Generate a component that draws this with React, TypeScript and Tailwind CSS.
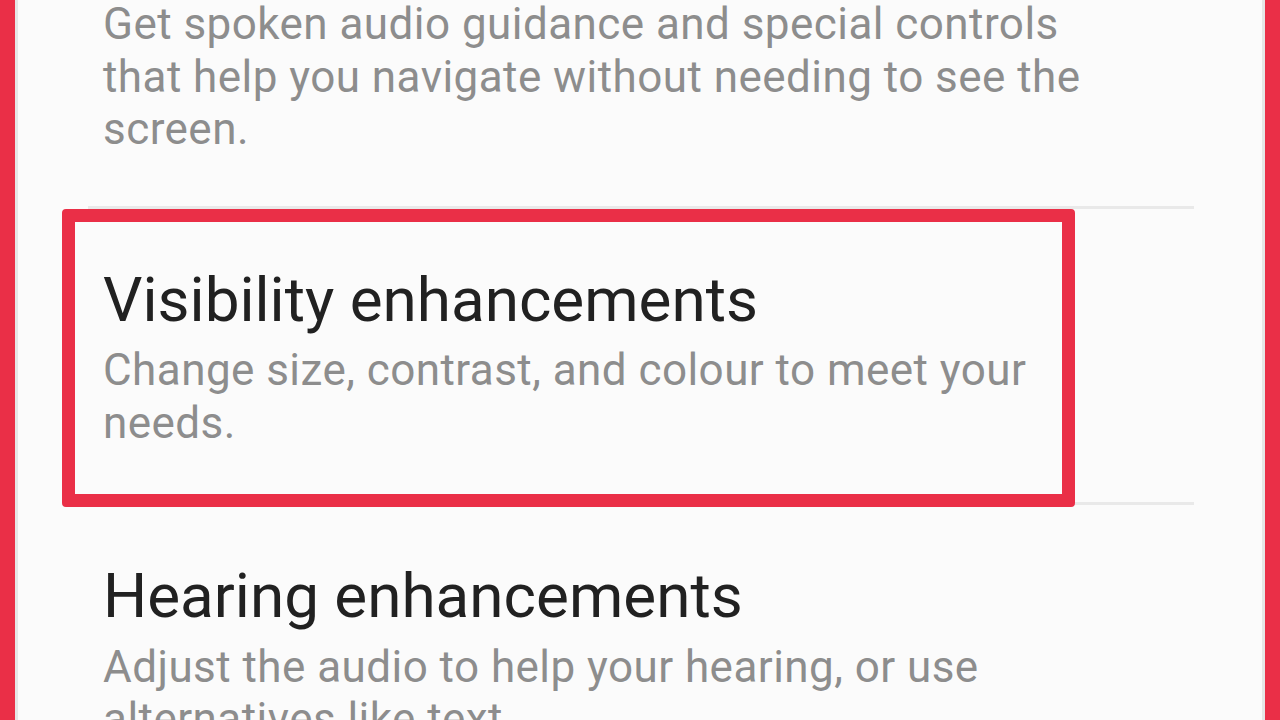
import React from "react";

const font = { fontFamily: "Roboto, 'Noto Sans', sans-serif" };

function Row({
  title,
  lines,
  first,
}: {
  title?: string;
  lines: string[];
  first?: boolean;
}) {
  return (
    <div className={first ? "mt-[-2px] pb-[50px]" : "pt-[55px] pb-[53px]"}>
      <div className="pl-[15px]">
        {title && (
          <div className="text-[62px] leading-[72px] text-[#212121] whitespace-nowrap mb-[8.5px]">
            {title}
          </div>
        )}
        <div className="text-[44px] leading-[52.5px] tracking-[0.45px] text-[#8d8d8d] whitespace-nowrap">
          {lines.map((l, i) => (
            <div key={i}>{l}</div>
          ))}
        </div>
      </div>
    </div>
  );
}

export default function App() {
  return (
    <div
      className="w-[1280px] h-[720px] overflow-hidden flex bg-[#fbfbfb]"
      style={font}
    >
      <div className="w-[15px] bg-[#ea2f47] shrink-0" />
      <div className="w-[3px] bg-[#e6e6e6] shrink-0" />
      <div className="flex-1 relative">
        <div className="ml-[70px] w-[1106px] flex flex-col">
          <Row
            first
            lines={[
              "Get spoken audio guidance and special controls",
              "that help you navigate without needing to see the",
              "screen.",
            ]}
          />
          <div className="h-[3px] bg-[#e9e9e9]" />
          <Row
            title="Visibility enhancements"
            lines={[
              "Change size, contrast, and colour to meet your",
              "needs.",
            ]}
          />
          <div className="h-[3px] bg-[#e9e9e9]" />
          <Row
            title="Hearing enhancements"
            lines={[
              "Adjust the audio to help your hearing, or use",
              "alternatives like text.",
            ]}
          />
        </div>
        <div className="absolute left-[44px] top-[209px] w-[1013px] h-[298px] border-[13px] border-[#ea2f47] rounded-[4px]" />
      </div>
      <div className="w-[3px] bg-[#e6e6e6] shrink-0" />
      <div className="w-[15px] bg-[#ea2f47] shrink-0" />
    </div>
  );
}
